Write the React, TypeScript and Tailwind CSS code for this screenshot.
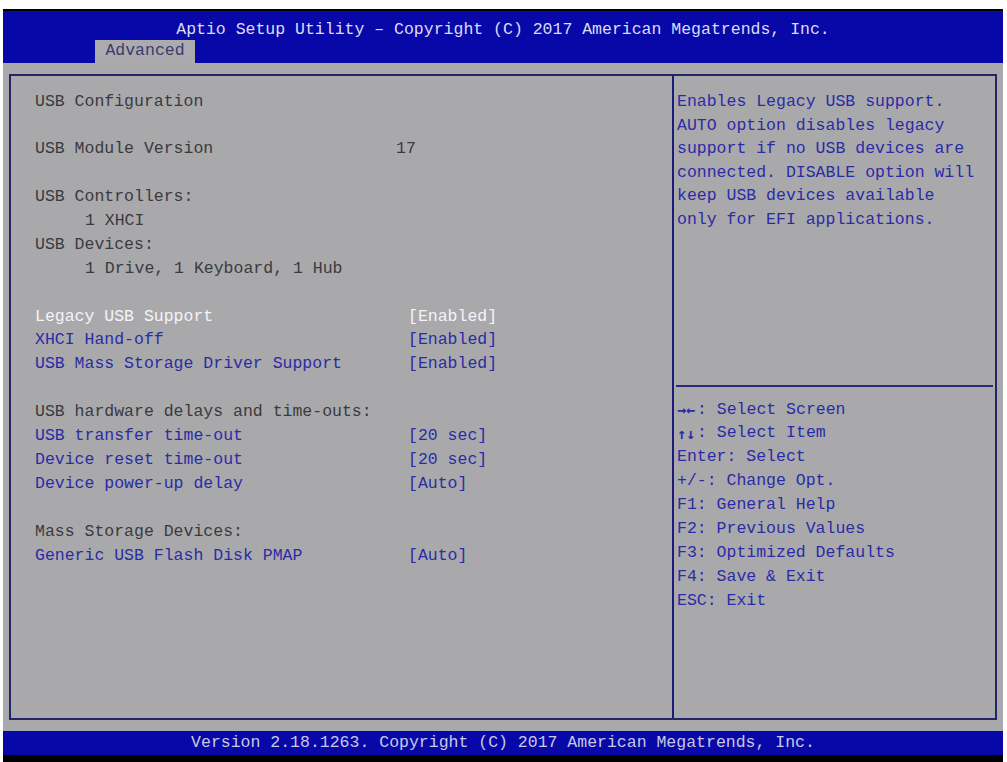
const mono = { fontFamily: '"Liberation Mono", "DejaVu Sans Mono", monospace' }

type Row =
  | { kind: 'text'; label: string; value?: string; indent?: boolean }
  | { kind: 'item'; label: string; value: string; selected?: boolean }
  | { kind: 'blank' }

const rows: Row[] = [
  { kind: 'text', label: 'USB Configuration' },
  { kind: 'blank' },
  { kind: 'text', label: 'USB Module Version', value: '17' },
  { kind: 'blank' },
  { kind: 'text', label: 'USB Controllers:' },
  { kind: 'text', label: '1 XHCI', indent: true },
  { kind: 'text', label: 'USB Devices:' },
  { kind: 'text', label: '1 Drive, 1 Keyboard, 1 Hub', indent: true },
  { kind: 'blank' },
  { kind: 'item', label: 'Legacy USB Support', value: '[Enabled]', selected: true },
  { kind: 'item', label: 'XHCI Hand-off', value: '[Enabled]' },
  { kind: 'item', label: 'USB Mass Storage Driver Support', value: '[Enabled]' },
  { kind: 'blank' },
  { kind: 'text', label: 'USB hardware delays and time-outs:' },
  { kind: 'item', label: 'USB transfer time-out', value: '[20 sec]' },
  { kind: 'item', label: 'Device reset time-out', value: '[20 sec]' },
  { kind: 'item', label: 'Device power-up delay', value: '[Auto]' },
  { kind: 'blank' },
  { kind: 'text', label: 'Mass Storage Devices:' },
  { kind: 'item', label: 'Generic USB Flash Disk PMAP', value: '[Auto]' },
]

const help = [
  'Enables Legacy USB support.',
  'AUTO option disables legacy',
  'support if no USB devices are',
  'connected. DISABLE option will',
  'keep USB devices available',
  'only for EFI applications.',
]

const keys: [string, string][] = [
  ['→←', ': Select Screen'],
  ['↑↓', ': Select Item'],
  ['', 'Enter: Select'],
  ['', '+/-: Change Opt.'],
  ['', 'F1: General Help'],
  ['', 'F2: Previous Values'],
  ['', 'F3: Optimized Defaults'],
  ['', 'F4: Save & Exit'],
  ['', 'ESC: Exit'],
]

function SetupRow({ row }: { row: Row }) {
  if (row.kind === 'blank') return <div className="h-[23.9px]" />
  if (row.kind === 'text') {
    return (
      <div className="flex h-[23.9px] items-center whitespace-pre text-[#3a3a3e]">
        <span className={row.value ? 'w-[361px]' : row.indent ? 'pl-[50px]' : ''}>{row.label}</span>
        {row.value && <span>{row.value}</span>}
      </div>
    )
  }
  const color = row.selected ? 'text-[#f4f4f8]' : 'text-[#2b2ba6]'
  return (
    <div className={`flex h-[23.9px] items-center whitespace-pre ${color}`}>
      <span className="w-[373px]">{row.label}</span>
      <span>{row.value}</span>
    </div>
  )
}

export default function App() {
  return (
    <div className="h-[762px] w-[1007px] overflow-hidden bg-white pt-[9px] pl-[3px] text-[16.5px]" style={mono}>
      <div className="w-[1000px]">
        {/* header */}
        <div className="border-t-2 border-black bg-[#0808a8]">
          <div className="h-[29px] pt-[9px] text-center leading-[20px] text-[#dcdcf4]">
            Aptio Setup Utility – Copyright (C) 2017 American Megatrends, Inc.
          </div>
          <div className="flex h-[23px] pl-[92px]">
            <div className="flex w-[100px] items-center justify-center bg-[#ababae] text-[#3a3a70]">Advanced</div>
          </div>
        </div>

        {/* body */}
        <div className="h-[668px] bg-[#a9a9ac] px-[6px] pt-[11px]">
          <div className="flex h-[646px] border-2 border-[#24246a]">
            <div className="w-[661px] pl-[24px] pt-[14px]">
              {rows.map((r, i) => (
                <SetupRow key={i} row={r} />
              ))}
            </div>
            <div className="flex flex-1 flex-col border-l-2 border-[#1c1c78] text-[#2b2ba6]">
              <div className="h-[309px] pl-[3px] pt-[15px]">
                {help.map(l => (
                  <div key={l} className="flex h-[23.5px] items-center whitespace-pre">{l}</div>
                ))}
              </div>
              <div className="mx-[2px] h-[2px] bg-[#2a2a78]" />
              <div className="pl-[3px] pt-[11px]">
                {keys.map(([arrows, text]) => (
                  <div key={text} className="flex h-[23.9px] items-center whitespace-pre">
                    {arrows && (
                      <span className="w-[20px] text-[15px] font-bold" style={{ fontFamily: '"DejaVu Sans Mono", monospace' }}>
                        {arrows}
                      </span>
                    )}
                    <span>{text}</span>
                  </div>
                ))}
              </div>
            </div>
          </div>
        </div>

        {/* footer */}
        <div className="flex h-[24px] items-center justify-center bg-[#0808a8] text-[#c8c8e4]">
          Version 2.18.1263. Copyright (C) 2017 American Megatrends, Inc.
        </div>
        <div className="h-[7px] bg-black" />
      </div>
    </div>
  )
}
